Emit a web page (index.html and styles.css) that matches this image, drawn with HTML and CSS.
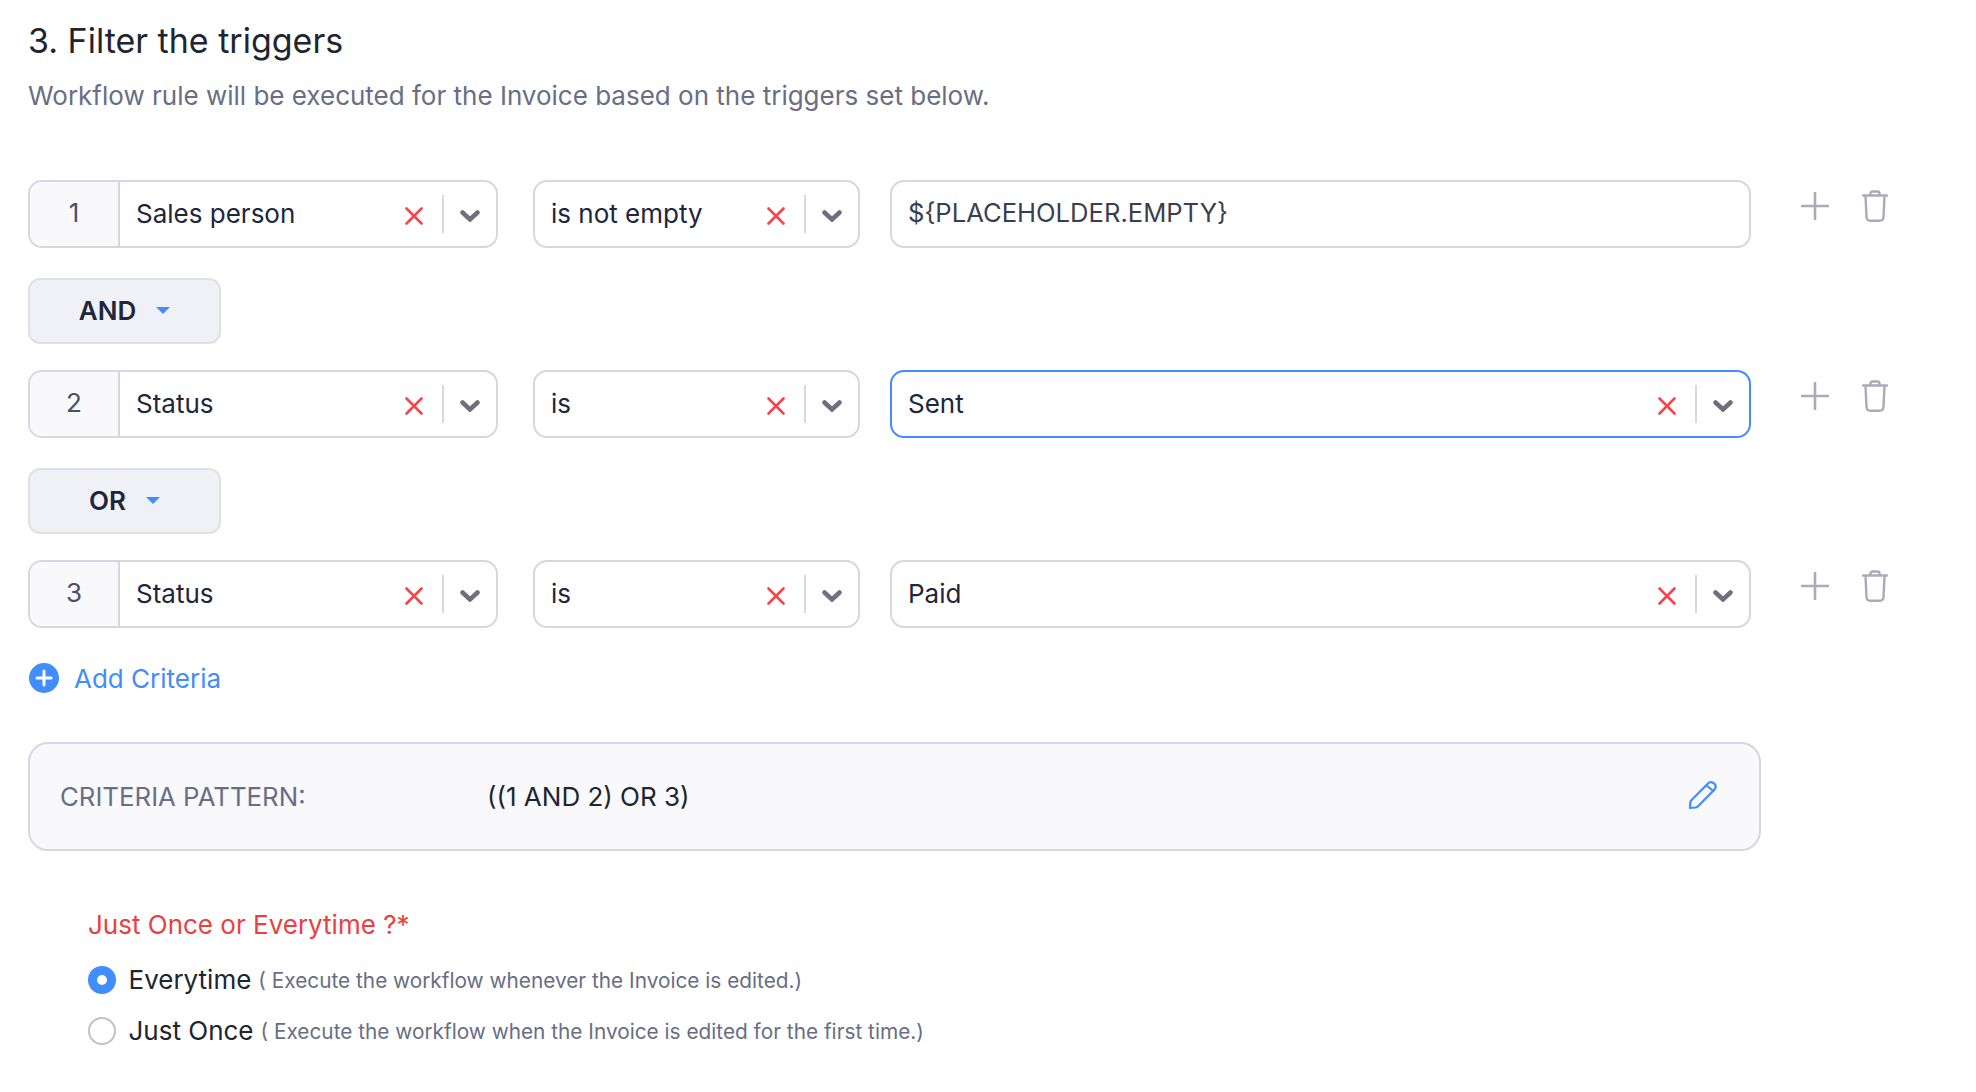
FILE: index.html
```html
<!DOCTYPE html>
<html lang="en">
<head>
<meta charset="utf-8">
<title>Filter the triggers</title>
<link rel="stylesheet" href="styles.css">
</head>
<body>
<svg class="defs" width="0" height="0" aria-hidden="true">
  <symbol id="i-x" viewBox="0 0 18 18"><path d="M1.5 1.5 16.5 16.5M16.5 1.5 1.5 16.5" fill="none" stroke="#f5444c" stroke-width="2.6" stroke-linecap="round"/></symbol>
  <symbol id="i-chev" viewBox="0 0 20 12"><path d="M2.500 2.500 10 9.500 17.500 2.500" fill="none" stroke="#6f6f80" stroke-width="4.500" stroke-linecap="round" stroke-linejoin="miter"/></symbol>
  <symbol id="i-plus" viewBox="0 0 28 28"><path d="M14 1V27M1 14H27" fill="none" stroke="#abaab8" stroke-width="2.6" stroke-linecap="round"/></symbol>
  <symbol id="i-trash" viewBox="0 0 26 32"><path d="M1 5.5H25M8.5 5V3.5Q8.500 1.500 10.500 1.500H15.500Q17.500 1.500 17.500 3.500V5M3.500 6 4.500 27Q4.700 30.700 8.500 30.700H17.500Q21.300 30.700 21.500 27L22.500 6" fill="none" stroke="#abaab8" stroke-width="2.4" stroke-linecap="round" stroke-linejoin="round"/></symbol>
</svg>

<main class="page">
  <h1 class="title">3. Filter the triggers</h1>
  <p class="subtitle">Workflow rule will be executed for the Invoice based on the triggers set below.</p>

  <div class="row row-first">
    <div class="field field-a"><span class="num">1</span><span class="val">Sales person</span><svg class="ix"><use href="#i-x"/></svg><i class="sep"></i><svg class="ichev"><use href="#i-chev"/></svg></div>
    <div class="field field-b"><span class="val">is not empty</span><svg class="ix"><use href="#i-x"/></svg><i class="sep"></i><svg class="ichev"><use href="#i-chev"/></svg></div>
    <div class="field field-c"><span class="val val-mono">${PLACEHOLDER.EMPTY}</span></div>
    <div class="actions"><svg class="iplus"><use href="#i-plus"/></svg><svg class="itrash"><use href="#i-trash"/></svg></div>
  </div>

  <button class="logic" type="button"><span class="logic-text">AND</span><i class="caret"></i></button>

  <div class="row">
    <div class="field field-a"><span class="num">2</span><span class="val">Status</span><svg class="ix"><use href="#i-x"/></svg><i class="sep"></i><svg class="ichev"><use href="#i-chev"/></svg></div>
    <div class="field field-b"><span class="val">is</span><svg class="ix"><use href="#i-x"/></svg><i class="sep"></i><svg class="ichev"><use href="#i-chev"/></svg></div>
    <div class="field field-c field-focus"><span class="val">Sent</span><svg class="ix"><use href="#i-x"/></svg><i class="sep"></i><svg class="ichev"><use href="#i-chev"/></svg></div>
    <div class="actions"><svg class="iplus"><use href="#i-plus"/></svg><svg class="itrash"><use href="#i-trash"/></svg></div>
  </div>

  <button class="logic" type="button"><span class="logic-text">OR</span><i class="caret"></i></button>

  <div class="row">
    <div class="field field-a"><span class="num">3</span><span class="val">Status</span><svg class="ix"><use href="#i-x"/></svg><i class="sep"></i><svg class="ichev"><use href="#i-chev"/></svg></div>
    <div class="field field-b"><span class="val">is</span><svg class="ix"><use href="#i-x"/></svg><i class="sep"></i><svg class="ichev"><use href="#i-chev"/></svg></div>
    <div class="field field-c"><span class="val">Paid</span><svg class="ix"><use href="#i-x"/></svg><i class="sep"></i><svg class="ichev"><use href="#i-chev"/></svg></div>
    <div class="actions"><svg class="iplus"><use href="#i-plus"/></svg><svg class="itrash"><use href="#i-trash"/></svg></div>
  </div>

  <a class="add" href="#">
    <svg class="iadd" viewBox="0 0 30 30"><circle cx="15" cy="15" r="15" fill="#408dfb"/><path d="M15 8V22M8 15H22" stroke="#fff" stroke-width="3" stroke-linecap="round"/></svg>
    <span>Add Criteria</span>
  </a>

  <section class="pattern">
    <span class="pattern-label">CRITERIA PATTERN:</span>
    <span class="pattern-value">((1 AND 2) OR 3)</span>
    <svg class="iedit" viewBox="0 0 30 30"><path d="M2 28 2.300 22.500Q2.500 21 3.800 19.800L19.500 4Q22 1.500 24.500 2.500L26.500 3.800Q29 6.500 26.500 9.500L10.300 26Q9 27.300 7.500 27.500ZM18.500 5.500 25.500 11" fill="none" stroke="#408dfb" stroke-width="2.200" stroke-linejoin="round" stroke-linecap="round"/></svg>
  </section>

  <div class="choice">
    <div class="choice-title">Just Once or Everytime ?*</div>
    <label class="radio-row">
      <i class="radio radio-on"></i><span class="radio-name">Everytime</span><span class="radio-note">( Execute the workflow whenever the Invoice is edited.)</span>
    </label>
    <label class="radio-row">
      <i class="radio"></i><span class="radio-name">Just Once</span><span class="radio-note">( Execute the workflow when the Invoice is edited for the first time.)</span>
    </label>
  </div>
</main>
</body>
</html>
```
FILE: styles.css
```css
* { box-sizing: border-box; }
html, body { margin: 0; padding: 0; background: #fff; }
body { font-family: Inter, "Liberation Sans", sans-serif; color: #21263c; overflow: hidden; }
.defs { position: absolute; }
.page { padding: 18px 0 0 28px; width: 1976px; height: 1092px; }
.title { margin: 0; font-size: 34px; line-height: 46px; font-weight: 400; color: #21252f; }
.subtitle { margin: 14px 0 0; font-size: 26px; line-height: 36px; color: #686e84; }
.row { display: flex; align-items: flex-start; height: 68px; }
.row-first { margin-top: 66px; }
.field { display: flex; align-items: center; height: 68px; border: 2px solid #d7d6e2; border-radius: 14px; background: #fff; font-size: 26px; padding-right: 16px; }
.field-a { width: 470px; }
.field-b { width: 327px; margin-left: 35px; padding-left: 16px; }
.field-c { width: 861px; margin-left: 30px; padding-left: 16px; }
.field-focus { border-color: #408dfb; }
.num { flex: none; width: 90px; height: 64px; display: flex; align-items: center; justify-content: center; background: #f9f9fc; border-right: 2px solid #d7d6e2; border-radius: 12px 0 0 12px; color: #4a5068; margin-right: 16px; padding-bottom: 4px; }
.val { flex: 1; color: #21263c; white-space: nowrap; padding-bottom: 1px; }
.val-mono { color: #3a3f50; padding-bottom: 3px; font-size: 25.6px; }
.ix { flex: none; width: 18px; height: 18px; margin: 4px 19px 0 0; }
.sep { flex: none; width: 2px; height: 38px; background: #d7d6e2; margin-right: 15px; }
.ichev { flex: none; width: 20px; height: 12px; margin: 3px 0 0 1px; }
.actions { display: flex; align-items: flex-start; margin-left: 50px; padding-top: 12px; }
.iplus { width: 28px; height: 28px; }
.itrash { width: 26px; height: 32px; margin: -2px 0 0 33px; }
.logic { display: flex; align-items: center; justify-content: center; width: 193px; height: 66px; margin: 30px 0 26px; padding: 0 0 1px; border: 2px solid #e0e0e5; border-radius: 12px; background: #f0f1f6; font: 600 26px Inter, "Liberation Sans", sans-serif; color: #21263c; }
.caret { width: 0; height: 0; margin-left: 20px; border: 7px solid transparent; border-top-color: #408dfb; border-bottom-width: 0; }
.add { display: flex; align-items: center; gap: 15px; margin-top: 34px; padding-left: 1px; height: 32px; font-size: 26px; color: #408dfb; text-decoration: none; }
.iadd { width: 30px; height: 30px; }
.pattern { display: flex; align-items: center; width: 1733px; height: 109px; margin-top: 48px; padding: 0 41px 0 30px; border: 2px solid #d7d6e2; border-radius: 20px; background: #f9f9fc; }
.pattern-label { width: 427px; font-size: 25.8px; color: #686e84; padding-bottom: 1px; }
.pattern-value { flex: 1; font-size: 26px; color: #21252f; }
.iedit { width: 30px; height: 30px; margin-bottom: 3px; }
.choice { padding: 56px 0 0 60px; }
.choice-title { font-size: 26px; line-height: 36px; color: #ea4040; }
.radio-row { display: flex; align-items: center; height: 51px; }
.radio-row:first-of-type { margin-top: 11px; }
.radio { flex: none; width: 28px; height: 28px; border: 2px solid #c2c2c5; border-radius: 50%; background: #fff; margin-right: 12.5px; }
.radio-on { border: 9px solid #408dfb; }
.radio-name { font-size: 26px; color: #21252f; margin-right: 7px; }
.radio-note { font-size: 20.8px; color: #686e84; padding-top: 2px; }
```
